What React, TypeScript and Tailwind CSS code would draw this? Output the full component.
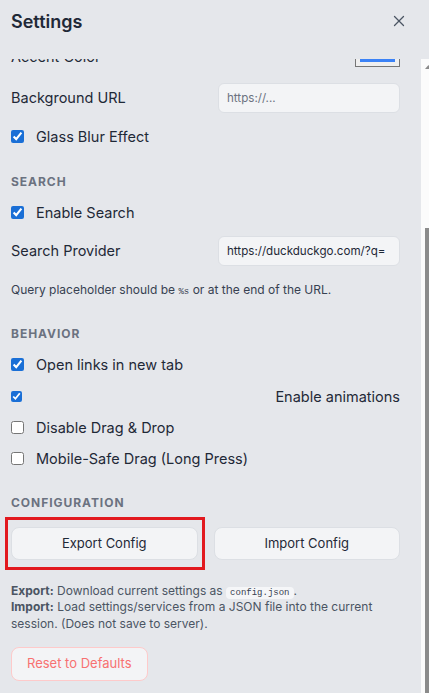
import React, { useEffect, useRef } from "react";
import { X } from "lucide-react";

const font = { fontFamily: "Inter, 'Noto Sans', sans-serif" };
const mono = { fontFamily: "'Liberation Mono', monospace" };

function SectionTitle({ children, className = "" }: { children: React.ReactNode; className?: string }) {
	return (
		<div className={`h-4 text-[12px] leading-4 font-bold tracking-[0.08em] text-[#6b7280] ${className}`}>
			{children}
		</div>
	);
}

function CheckRow({ label, checked, className = "" }: { label: string; checked?: boolean; className?: string }) {
	return (
		<label className={`flex h-5 items-center gap-3 text-[14.5px] text-[#1f2937] ${className}`}>
			<input type="checkbox" defaultChecked={checked} className="m-0 h-[13px] w-[13px] shrink-0 accent-[#1a6fd6]" />
			<span>{label}</span>
		</label>
	);
}

function InputRow({ label, value, placeholder, className = "" }: { label: string; value?: string; placeholder?: string; className?: string }) {
	return (
		<div className={`flex h-[30px] items-center justify-between text-[14.5px] text-[#1f2937] ${className}`}>
			<span>{label}</span>
			<input
				defaultValue={value}
				placeholder={placeholder}
				className="h-[30px] w-[182px] rounded-md border border-[#dcdfe4] bg-[#f3f4f6] px-[8px] text-[11.6px] text-[#1f2937] outline-none placeholder:text-[#6b7280]"
			/>
		</div>
	);
}

export default function App() {
	const bodyRef = useRef<HTMLDivElement>(null);

	useEffect(() => {
		if (bodyRef.current) {
			bodyRef.current.scrollTop = bodyRef.current.scrollHeight;
		}
	}, []);

	return (
		<div className="h-[693px] w-[429px] overflow-hidden bg-[#e5e7eb]" style={font}>
			<div className="flex h-full w-[436px] flex-col">
				{/* Header */}
				<div className="flex h-[59px] shrink-0 items-start justify-between pl-[11px] pr-[28px] pt-[10px]">
					<h2 className="text-[18px] font-semibold leading-6 text-[#1f2937]">Settings</h2>
					<button className="mt-[2px] text-[#4b5563]">
						<X size={18} strokeWidth={1.75} />
					</button>
				</div>

				<div className="flex min-h-0 flex-1">
					{/* Body */}
					<div
						ref={bodyRef}
						className="flex w-[421px] shrink-0 flex-col overflow-y-auto pb-3 pl-[11px] pr-[21px] [scrollbar-width:none]"
					>
						<SectionTitle className="mt-4">APPEARANCE</SectionTitle>
						<div className="mt-[13px] flex h-[30px] items-center justify-between text-[14.5px] text-[#1f2937]">
							<span>Theme</span>
							<select className="h-[30px] w-[182px] rounded-md border border-[#dcdfe4] bg-[#f3f4f6] px-2 text-[11.6px]">
								<option>System</option>
							</select>
						</div>
						<div className="mt-3 flex h-[30px] items-center justify-between text-[14.5px] text-[#1f2937]">
							<span>Layout</span>
							<select className="h-[30px] w-[182px] rounded-md border border-[#dcdfe4] bg-[#f3f4f6] px-2 text-[11.6px]">
								<option>Grid</option>
							</select>
						</div>
						<div className="mt-3 flex h-[30px] items-center justify-between text-[14.5px] text-[#1f2937]">
							<span>Columns</span>
							<input defaultValue="4" className="h-[30px] w-[182px] rounded-md border border-[#dcdfe4] bg-[#f3f4f6] px-2 text-[11.6px]" />
						</div>
						<div className="mt-3 flex h-[30px] items-center justify-between text-[14.5px] text-[#1f2937]">
							<span className="mt-[5px]">Accent Color</span>
							<div className="h-[26px] w-[45px] border border-[#767676] bg-[#efefef] p-[4px]">
								<div className="h-full w-full bg-[#3b82f6]" />
							</div>
						</div>
						<InputRow label="Background URL" placeholder="https://..." className="mt-[15px]" />
						<CheckRow label="Glass Blur Effect" checked className="mt-[14px]" />

						<SectionTitle className="mt-[27px]">SEARCH</SectionTitle>
						<CheckRow label="Enable Search" checked className="mt-[13px]" />
						<InputRow label="Search Provider" value="https://duckduckgo.com/?q=" className="mt-[13px]" />
						<p className="mt-4 h-4 text-[12px] leading-4 text-[#374151]">
							Query placeholder should be <code className="text-[9px] leading-none" style={mono}>%s</code> or at the end of the URL.
						</p>

						<SectionTitle className="mt-[28px]">BEHAVIOR</SectionTitle>
						<CheckRow label="Open links in new tab" checked className="mt-[13px]" />
						<label className="mt-3 flex h-5 items-center justify-between text-[14.5px] text-[#1f2937]">
							<input type="checkbox" defaultChecked className="m-0 h-[11px] w-[11px] accent-[#1a6fd6]" />
							<span>Enable animations</span>
						</label>
						<CheckRow label="Disable Drag & Drop" className="mt-[11px]" />
						<CheckRow label="Mobile-Safe Drag (Long Press)" className="mt-[11px]" />

						<SectionTitle className="mt-[26px]">CONFIGURATION</SectionTitle>
						<div className="mt-4 grid grid-cols-2 gap-4">
							<div className="relative">
								<button className="h-[33px] w-full rounded-lg border border-[#dcdfe4] bg-[#f3f4f6] text-[13px] text-[#1f2937]">
									Export Config
								</button>
								<div className="pointer-events-none absolute -bottom-[10px] -left-[6px] -right-[7px] -top-[10px] border-[3px] border-[#e2191f]" />
							</div>
							<button className="h-[33px] rounded-lg border border-[#dcdfe4] bg-[#f3f4f6] text-[13px] text-[#1f2937]">
								Import Config
							</button>
						</div>
						<div className="mt-[21px] h-[50px] shrink-0 pt-[2px] text-[12px] leading-[16.5px] text-[#4b5563]">
							<p>
								<span className="font-bold">Export:</span> Download current settings as{" "}
								<code className="rounded bg-[#f5f6f8] px-1 py-[1px] text-[9px] leading-none text-[#374151]" style={mono}>
									config.json
								</code>
								.
							</p>
							<p>
								<span className="font-bold">Import:</span> Load settings/services from a JSON file into the current session. (Does not save to server).
							</p>
						</div>
						<div className="mt-4">
							<button className="h-[34px] rounded-lg border border-[#fecaca] bg-[#f3f4f6] px-[15px] text-[13px] text-[#f87171]">
								Reset to Defaults
							</button>
						</div>
					</div>

					{/* Scrollbar */}
					<div className="flex w-[15px] shrink-0 flex-col bg-[#fbfbfb]">
						<div className="flex h-[15px] items-center justify-center">
							<svg width="7" height="4" viewBox="0 0 7 4">
								<path d="M0 4 L3.5 0 L7 4 Z" fill="#8a8a8a" />
							</svg>
						</div>
						<div className="h-[154px]" />
						<div className="ml-[4px] flex-1 bg-[#8b8b8b]" />
					</div>
				</div>
			</div>
		</div>
	);
}
